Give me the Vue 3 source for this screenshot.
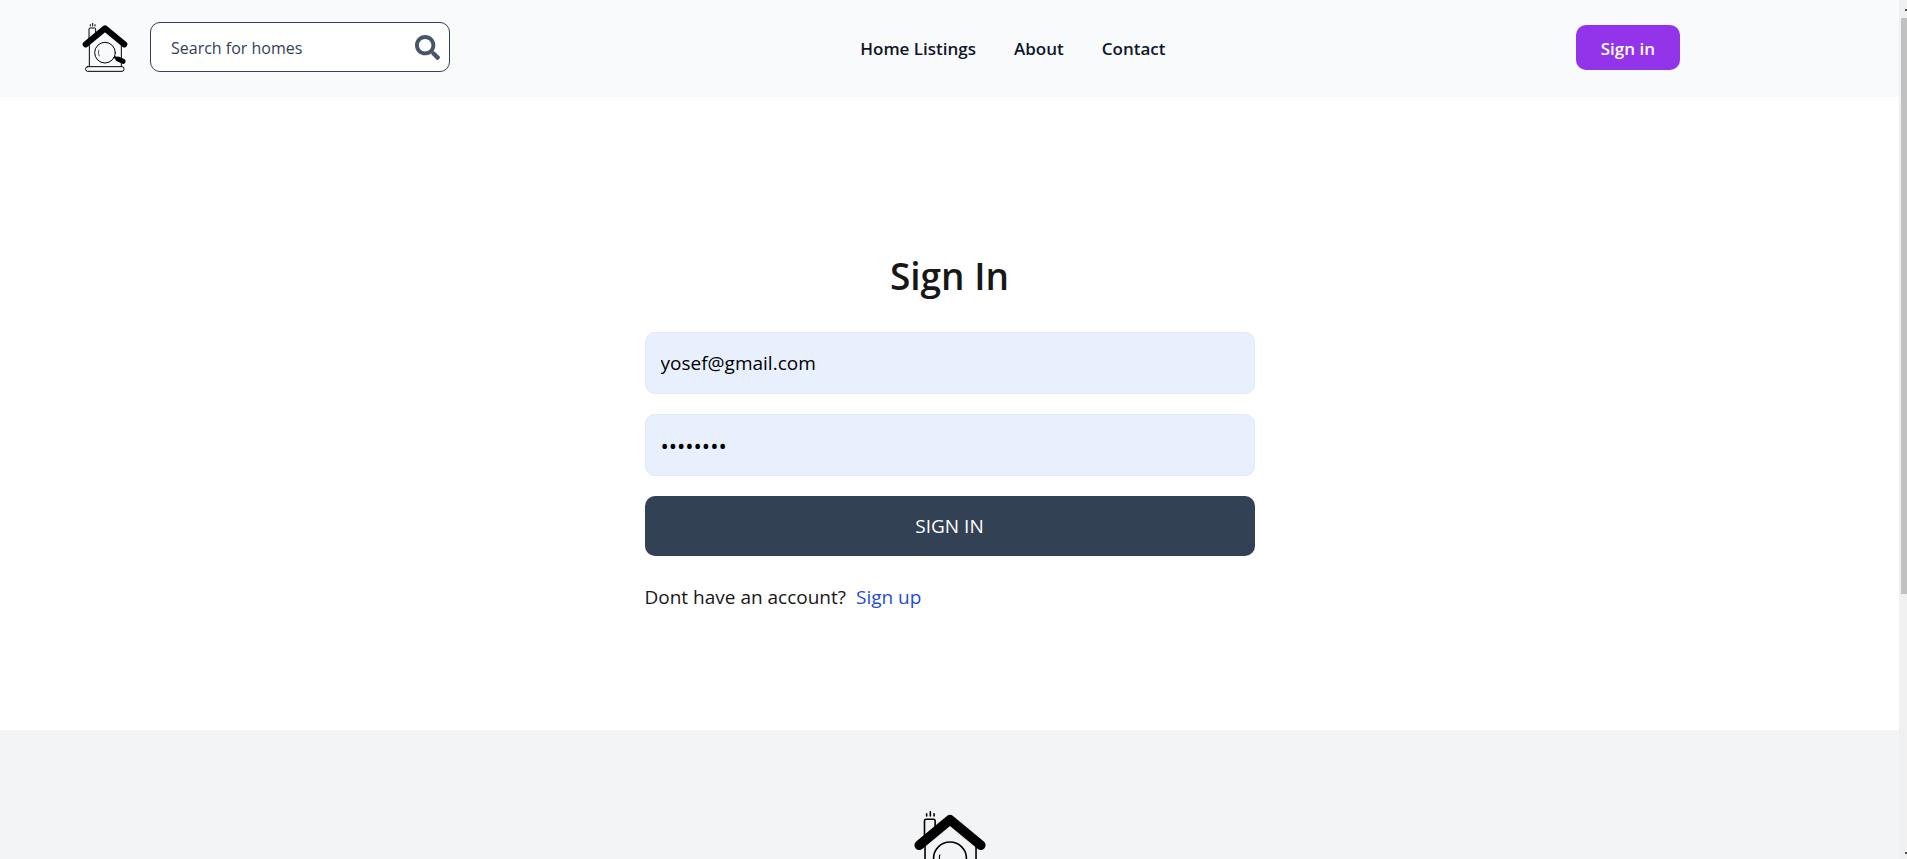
<script setup>
import { ref } from 'vue'

const search = ref('')
const email = ref('yosef@gmail.com')
const password = ref('password')
const links = ['Home Listings', 'About', 'Contact']
</script>

<template>
  <div class="window">
    <svg width="0" height="0" class="sprite" aria-hidden="true">
      <symbol id="house" viewBox="30 30 150 160">
        <g fill="none" stroke="currentColor" stroke-linecap="round" stroke-linejoin="round">
          <path stroke-width="3" d="M61 43v4M68 39v8M75 43v4" />
          <path stroke-width="3" d="M57 88V56q0-3 3-3h14q3 0 3 3v12" />
          <path stroke-width="3" d="M58 98v71M154 98v71" />
          <rect stroke-width="3" x="47" y="169" width="115" height="14" rx="6" />
          <path stroke-width="18" d="M47 102L105 54L163 102" />
          <circle stroke-width="3" cx="105" cy="127" r="31" />
          <path stroke-width="2" d="M86 120q-3 9 2 17" />
          <path stroke-width="8" d="M135 141l6 3" />
          <path stroke-width="15" d="M144 146l15 7" />
        </g>
      </symbol>
    </svg>

    <div class="page">
      <header class="header">
        <div class="bar">
          <div class="brand">
            <a href="#" aria-label="Home" class="home"><svg class="logo"><use href="#house" /></svg></a>
            <form class="search" @submit.prevent>
              <input v-model="search" type="text" placeholder="Search for homes" aria-label="Search for homes" />
              <button type="submit" aria-label="Search">
                <svg viewBox="0 0 512 512" fill="currentColor"><path d="M505 442.7L405.300 343c-4.500-4.500-10.600-7-17-7H372c27.600-35.300 44-79.700 44-128C416 93.100 322.900 0 208 0S0 93.100 0 208s93.100 208 208 208c48.300 0 92.700-16.400 128-44v16.300c0 6.400 2.500 12.500 7 17l99.700 99.700c9.400 9.400 24.600 9.400 33.900 0l28.300-28.300c9.400-9.400 9.400-24.600.1-34zM208 336c-70.700 0-128-57.200-128-128 0-70.700 57.200-128 128-128 70.700 0 128 57.200 128 128 0 70.700-57.200 128-128 128z" /></svg>
              </button>
            </form>
          </div>
          <nav class="nav">
            <a v-for="link in links" :key="link" href="#">{{ link }}</a>
          </nav>
          <button type="button" class="sign-in">Sign in</button>
        </div>
      </header>

      <main class="main">
        <h1>Sign In</h1>
        <form class="form" @submit.prevent>
          <input v-model="email" type="email" aria-label="Email" />
          <input v-model="password" type="password" aria-label="Password" />
          <button type="submit">SIGN IN</button>
        </form>
        <p class="account"><span>Dont have an account?</span><a href="#">Sign up</a></p>
      </main>

      <footer class="footer">
        <svg class="footer-logo" role="img" aria-label="House logo"><use href="#house" /></svg>
      </footer>
    </div>

    <div class="scrollbar" aria-hidden="true">
      <i class="arrow up"></i>
      <div class="thumb"></div>
      <i class="arrow down"></i>
    </div>
  </div>
</template>

<style>
body {
  margin: 0;
  background: #fff;
}
</style>

<style scoped>
.window {
  display: flex;
  height: 100vh;
  overflow: hidden;
  font-family: "Open Sans", "Noto Sans", sans-serif;
  color: #171717;
}
.window *,
.window *::before {
  box-sizing: border-box;
}
.sprite {
  position: absolute;
}
.page {
  flex: 1;
  min-width: 0;
}
input,
button {
  font: inherit;
  margin: 0;
  outline: 0;
}
button {
  border: 0;
  cursor: pointer;
}
a {
  color: inherit;
  text-decoration: none;
}
.header {
  background: #f8fafc;
  padding: 20px 80px 23px;
}
.bar {
  display: flex;
  align-items: center;
  justify-content: space-between;
  max-width: 1600px;
}
.brand {
  display: flex;
  align-items: center;
  gap: 20px;
}
.home {
  display: flex;
}
.logo {
  width: 50px;
  height: 54px;
  color: #000;
}
.search {
  display: flex;
  align-items: center;
  width: 300px;
  height: 50px;
  padding: 0 9px 0 20px;
  background: #fff;
  border: 1px solid #334155;
  border-radius: 10px;
}
.search input {
  flex: 1;
  min-width: 0;
  border: 0;
  padding: 2px 0 0;
  background: transparent;
  font-size: 16px;
  color: #334155;
}
.search input::placeholder {
  color: #334155;
  opacity: 1;
}
.search button {
  display: flex;
  padding: 0;
  background: transparent;
  color: #475569;
}
.search svg {
  width: 25px;
  height: 25px;
}
.nav {
  display: flex;
  gap: 38px;
  padding-top: 3px;
  font-size: 17px;
  font-weight: 600;
  color: #0f172a;
}
.sign-in {
  height: 45px;
  padding: 2px 25px 0;
  border-radius: 10px;
  background: #9333ea;
  color: #fff;
  font-size: 17px;
  font-weight: 600;
}
.main {
  max-width: 610px;
  margin: 0 auto;
  padding: 151px 0 118px;
}
h1 {
  margin: 0 0 28px;
  font-size: 37px;
  line-height: 56px;
  font-weight: 600;
  text-align: center;
}
.form {
  display: grid;
  gap: 20px;
}
.form input {
  width: 100%;
  height: 62px;
  padding: 0 15px;
  border: 1px solid #e2e8f0;
  border-radius: 10px;
  background: #e8f0fe;
  color: #000;
  font-size: 19px;
}
.form input[type="password"] {
  font-size: 22px;
}
.form button {
  height: 60px;
  border-radius: 10px;
  background: #334155;
  color: #fff;
  font-size: 19px;
}
.account {
  display: flex;
  gap: 10px;
  margin: 26px 0 0;
  font-size: 19px;
  line-height: 30px;
}
.account a {
  color: #1d4ed8;
}
.footer {
  display: flex;
  justify-content: center;
  padding: 77px 0;
  background: #f3f4f6;
}
.footer-logo {
  width: 80px;
  height: 85px;
  color: #000;
}
.scrollbar {
  display: flex;
  flex-direction: column;
  align-items: flex-end;
  width: 8px;
  background: #f0f0f0;
}
.arrow {
  width: 2px;
  height: 2px;
  background: #505050;
}
.up {
  margin: 9px 0 7px;
}
.thumb {
  width: 6px;
  height: 67%;
  background: #c1c1c1;
}
.down {
  margin: auto 0 5px;
}
</style>
